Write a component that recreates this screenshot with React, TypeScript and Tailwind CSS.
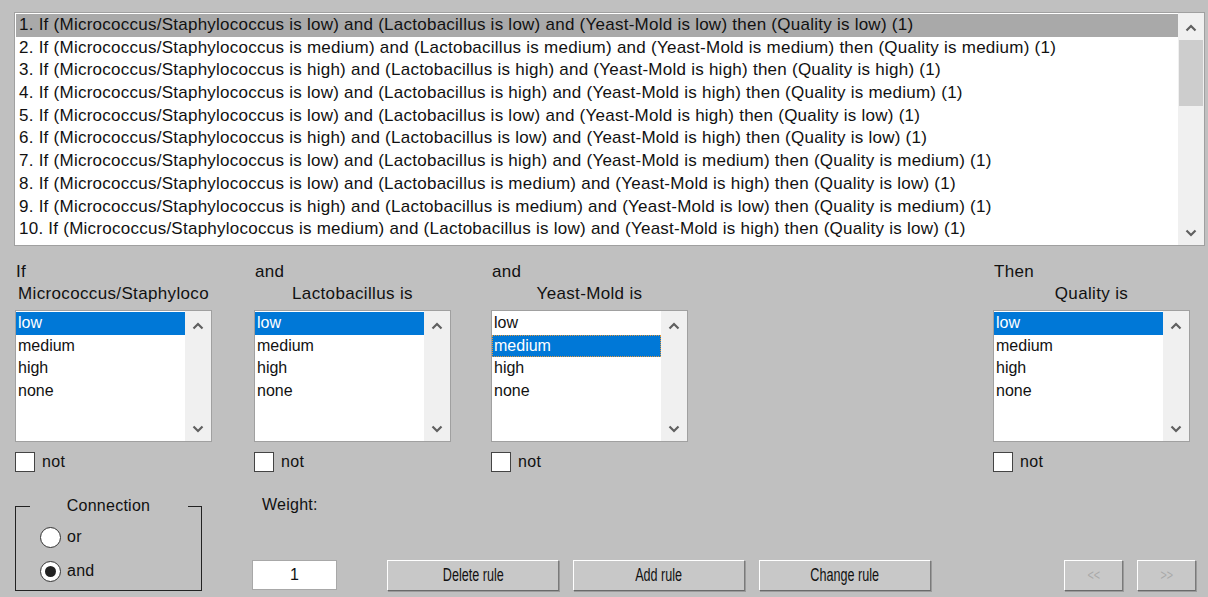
import { useState } from "react";

const rules = [
  "1. If (Micrococcus/Staphylococcus is low) and (Lactobacillus is low) and (Yeast-Mold is low) then (Quality is low) (1)",
  "2. If (Micrococcus/Staphylococcus is medium) and (Lactobacillus is medium) and (Yeast-Mold is medium) then (Quality is medium) (1)",
  "3. If (Micrococcus/Staphylococcus is high) and (Lactobacillus is high) and (Yeast-Mold is high) then (Quality is high) (1)",
  "4. If (Micrococcus/Staphylococcus is low) and (Lactobacillus is high) and (Yeast-Mold is high) then (Quality is medium) (1)",
  "5. If (Micrococcus/Staphylococcus is low) and (Lactobacillus is low) and (Yeast-Mold is high) then (Quality is low) (1)",
  "6. If (Micrococcus/Staphylococcus is high) and (Lactobacillus is low) and (Yeast-Mold is high) then (Quality is low) (1)",
  "7. If (Micrococcus/Staphylococcus is low) and (Lactobacillus is high) and (Yeast-Mold is medium) then (Quality is medium) (1)",
  "8. If (Micrococcus/Staphylococcus is low) and (Lactobacillus is medium) and (Yeast-Mold is high) then (Quality is low) (1)",
  "9. If (Micrococcus/Staphylococcus is high) and (Lactobacillus is medium) and (Yeast-Mold is low) then (Quality is medium) (1)",
  "10. If (Micrococcus/Staphylococcus is medium) and (Lactobacillus is low) and (Yeast-Mold is high) then (Quality is low) (1)",
];

const terms = ["low", "medium", "high", "none"];

function Chevron({ up }: { up?: boolean }) {
  return (
    <svg width="12" height="8" viewBox="0 0 12 8">
      <path
        d={up ? "M1.5 6.5 L6 2 L10.5 6.5" : "M1.5 1.5 L6 6 L10.5 1.5"}
        fill="none"
        stroke="#606060"
        strokeWidth="2.2"
      />
    </svg>
  );
}

function ScrollBar({ thumb }: { thumb?: boolean }) {
  return (
    <div className="flex w-[26px] flex-col items-center bg-[#f0f0f0]">
      <div className="flex h-[27px] w-full items-center justify-center pt-[3px]">
        <Chevron up />
      </div>
      <div className="w-full flex-1 px-px">
        {thumb && <div className="h-[66px] w-full bg-[#cdcdcd]" />}
      </div>
      <div className="flex h-[24px] w-full items-center justify-center">
        <Chevron />
      </div>
    </div>
  );
}

function TermList({ selected, focused }: { selected: number; focused?: boolean }) {
  return (
    <div className="flex h-[132px] w-[197px] border border-[#a0a0a0] bg-white">
      <div className="flex-1 pt-px text-[16px] tracking-normal">
        {terms.map((t, i) => {
          const on = i === selected;
          const cls = on
            ? focused
              ? "bg-[#0078d7] text-white outline-1 outline-dotted outline-[#e09840] -outline-offset-1"
              : "bg-[#0078d7] text-white"
            : "text-[#111]";
          return (
            <div key={t} className={`h-[22.6px] pl-[2px] leading-[22px] ${cls}`}>
              {t}
            </div>
          );
        })}
      </div>
      <ScrollBar />
    </div>
  );
}

function NotBox() {
  return (
    <div className="mt-[8px] flex items-center gap-[7px] text-[16px]">
      <div className="h-[20px] w-[20px] border border-[#444] bg-white" />
      <span>not</span>
    </div>
  );
}

function Radio({ checked, label }: { checked?: boolean; label: string }) {
  return (
    <div className="flex items-center gap-[6px] text-[16px]">
      <div className="flex h-[21px] w-[21px] items-center justify-center rounded-full border border-[#333] bg-white">
        {checked && <div className="h-[11px] w-[11px] rounded-full bg-[#222]" />}
      </div>
      <span>{label}</span>
    </div>
  );
}

function Btn({ children, w, disabled }: { children: string; w: string; disabled?: boolean }) {
  return (
    <button
      className={`flex h-[31px] ${w} items-center justify-center border border-t-white border-l-white border-r-[#7a7a7a] border-b-[#6a6a6a] bg-[#c8c8c8] shadow-[1px_1px_0_#9a9a9a] ${
        disabled ? "text-[15px] text-[#a8a8a8]" : "text-[17.5px] text-[#111]"
      }`}
    >
      <span className="inline-block scale-x-[0.72] whitespace-nowrap tracking-normal">{children}</span>
    </button>
  );
}

export default function App() {
  const [sel] = useState(0);

  return (
    <div
      className="h-[597px] w-[1208px] overflow-hidden bg-[#c0c0c0] pt-[12px] pl-[14px] text-[17px] tracking-[0.25px] text-[#111]"
      style={{ fontFamily: '"Liberation Sans", Arial, sans-serif' }}
    >
      {/* rule list */}
      <div className="flex h-[234px] w-[1191px] border border-[#a0a0a0] bg-white">
        <div className="flex-1 pt-px pl-px">
          {rules.map((r, i) => (
            <div
              key={r}
              className={`h-[22.7px] pl-[3px] leading-[22px] whitespace-nowrap ${
                i === sel ? "bg-[#a9a9a9]" : ""
              }`}
            >
              {r}
            </div>
          ))}
        </div>
        <ScrollBar thumb />
      </div>

      {/* antecedent / consequent columns */}
      <div className="mt-[15px] flex pl-px tracking-[0.35px]">
        <div className="w-[197px]">
          <div className="h-[22px] pl-[1px] leading-[22px]">If</div>
          <div className="h-[22px] pl-[3px] leading-[22px] whitespace-nowrap">Micrococcus/Staphyloco</div>
          <div className="mt-[5px]">
            <TermList selected={0} />
          </div>
          <NotBox />
        </div>
        <div className="ml-[42px] w-[197px]">
          <div className="h-[22px] pl-[1px] leading-[22px]">and</div>
          <div className="h-[22px] text-center leading-[22px]">Lactobacillus is</div>
          <div className="mt-[5px]">
            <TermList selected={0} />
          </div>
          <NotBox />
        </div>
        <div className="ml-[40px] w-[197px]">
          <div className="h-[22px] pl-[1px] leading-[22px]">and</div>
          <div className="h-[22px] text-center leading-[22px]">Yeast-Mold is</div>
          <div className="mt-[5px]">
            <TermList selected={1} focused />
          </div>
          <NotBox />
        </div>
        <div className="ml-[305px] w-[197px]">
          <div className="h-[22px] pl-[1px] leading-[22px]">Then</div>
          <div className="h-[22px] text-center leading-[22px]">Quality is</div>
          <div className="mt-[5px]">
            <TermList selected={0} />
          </div>
          <NotBox />
        </div>
      </div>

      {/* connection, weight and actions */}
      <div className="mt-[20px] flex items-end pl-px">
        <fieldset className="h-[97px] w-[187px] shrink-0 border border-[#222] px-[9px] pt-0">
          <legend className="w-[158px] text-center text-[16px]">Connection</legend>
          <div className="mt-[7px] flex flex-col gap-[10px] pl-[15px]">
            <Radio label="or" />
            <Radio label="and" checked />
          </div>
        </fieldset>
        <div className="ml-[50px] flex h-[97px] flex-col justify-between">
          <div className="pl-[10px] text-[16px] leading-[22px]">Weight:</div>
          <div className="mb-[1px] h-[30px] w-[85px] border border-[#a8a8a8] bg-white text-center text-[16px] leading-[28px]">
            1
          </div>
        </div>
        <div className="ml-[50px] flex gap-[14px]">
          <Btn w="w-[172px]">Delete rule</Btn>
          <Btn w="w-[172px]">Add rule</Btn>
          <Btn w="w-[172px]">Change rule</Btn>
        </div>
        <div className="ml-[133px] flex gap-[14px]">
          <Btn w="w-[59px]" disabled>
            {"<<"}
          </Btn>
          <Btn w="w-[59px]" disabled>
            {">>"}
          </Btn>
        </div>
      </div>
    </div>
  );
}
